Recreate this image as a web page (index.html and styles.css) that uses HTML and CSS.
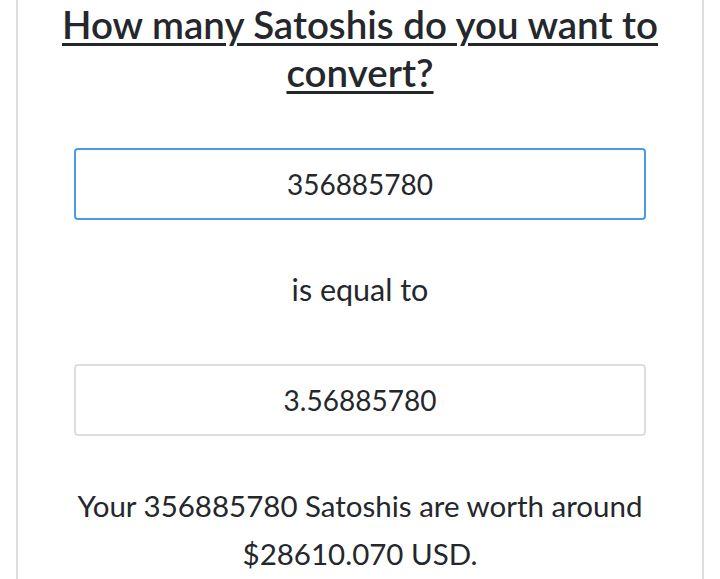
FILE: index.html
```html
<!DOCTYPE html>
<html lang="en">
  <head>
    <meta charset="UTF-8" />
    <meta name="viewport" content="width=device-width, initial-scale=1.0" />
    <title>Satoshi Converter</title>
    <link rel="stylesheet" href="styles.css">
  </head>
  <body>
    <main class="card">
      <h1 class="title">How many Satoshis do you want to convert?</h1>
      <input class="amount amount-active" type="text" value="356885780" />
      <p class="equal">is equal to</p>
      <input class="amount" type="text" value="3.56885780" readonly />
      <p class="result">Your 356885780 Satoshis are worth around $28610.070 USD.</p>
    </main>
  </body>
</html>
```

FILE: styles.css
```css
body {
  margin: 0;
  font-family: Lato, "Liberation Sans", sans-serif;
  color: #24272b;
  background: #fff;
  overflow: hidden;
}

.card {
  margin: 0 16px;
  min-height: 579px;
  border-left: 2px solid #dcdcdc;
  border-right: 2px solid #dcdcdc;
  display: flex;
  flex-direction: column;
  align-items: center;
  text-align: center;
}

.title {
  margin: 0;
  padding: 0 36px;
  font-size: 38.5px;
  line-height: 48px;
  font-weight: 600;
  text-decoration: underline;
  text-decoration-thickness: 3px;
  text-underline-offset: 4px;
}

.amount {
  box-sizing: border-box;
  width: 572px;
  height: 72px;
  margin-top: 52px;
  border: 2px solid #dcdee0;
  border-radius: 4px;
  font: inherit;
  font-size: 28px;
  color: #24272b;
  text-align: center;
  outline: none;
}

.amount-active {
  border-color: #4a9be6;
}

.equal {
  margin: 51px 0 0;
  font-size: 30.5px;
  line-height: 36px;
}

.equal + .amount {
  margin-top: 57px;
}

.result {
  margin: 46px 0 0;
  padding: 0 30px;
  font-size: 29.5px;
  line-height: 48px;
}
```
